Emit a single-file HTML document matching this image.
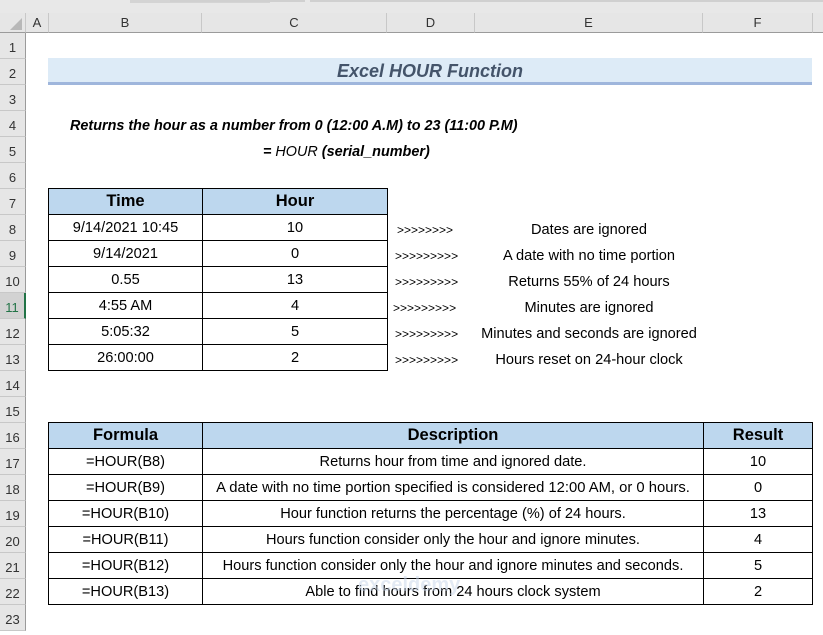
<!DOCTYPE html>
<html><head><meta charset="utf-8"><style>
*{margin:0;padding:0;box-sizing:border-box}
body{width:823px;height:618px;overflow:hidden;background:#fff;font-family:"Liberation Sans",Arial,sans-serif;font-size:14.6px;color:#000;position:relative}
.a{position:absolute}
.top{left:0;top:0;width:823px;height:13px;background:#e8e8e8}
.colh{top:13px;height:20px;background:#e6e6e6;border-bottom:1px solid #9b9b9b;color:#333;font-size:13px;text-align:center;line-height:19px;border-right:1px solid #c8c8c8}
.rowh{left:0;width:26px;height:26px;background:#e6e6e6;border-bottom:1px solid #c8c8c8;border-right:1px solid #9b9b9b;color:#333;font-size:13px;text-align:center;line-height:30px}
table{position:absolute;border-collapse:collapse;table-layout:fixed}
td{border:1px solid #000;height:26px;text-align:center;padding:0;white-space:nowrap;font-size:14.6px;padding-top:1px}
th{border:1px solid #000;height:26px;background:#bdd7ee;font-size:16.5px;font-weight:bold}
.t{white-space:nowrap;line-height:26px;margin-top:2px}
</style></head><body>
<div class="a top"></div>
<div class="a" style="left:130px;top:0;width:140px;height:3px;background:#d4d4d4"></div>
<div class="a" style="left:170px;top:0;width:135px;height:2px;background:#d0d0d0"></div>
<div class="a" style="left:310px;top:0;width:513px;height:2px;background:#d0d0d0"></div>
<div class="a colh" style="left:0;width:26px"><svg width="16" height="16" style="position:absolute;left:8px;top:3px"><polygon points="14,2 14,14 2,14" fill="#b8b8b8"/></svg></div>
<div class="a colh" style="left:26px;width:23px">A</div>
<div class="a colh" style="left:49px;width:153px">B</div>
<div class="a colh" style="left:202px;width:185px">C</div>
<div class="a colh" style="left:387px;width:88px">D</div>
<div class="a colh" style="left:475px;width:228px">E</div>
<div class="a colh" style="left:703px;width:110px">F</div>
<div class="a colh" style="left:813px;width:10px;border-right:none"></div>

<div class="a rowh" style="top:33px">1</div>
<div class="a rowh" style="top:59px">2</div>
<div class="a rowh" style="top:85px">3</div>
<div class="a rowh" style="top:111px">4</div>
<div class="a rowh" style="top:137px">5</div>
<div class="a rowh" style="top:163px">6</div>
<div class="a rowh" style="top:189px">7</div>
<div class="a rowh" style="top:215px">8</div>
<div class="a rowh" style="top:241px">9</div>
<div class="a rowh" style="top:267px">10</div>
<div class="a rowh" style="top:293px;background:#d2d2d2;border-right:2px solid #217346;color:#217346">11</div>
<div class="a rowh" style="top:319px">12</div>
<div class="a rowh" style="top:345px">13</div>
<div class="a rowh" style="top:371px">14</div>
<div class="a rowh" style="top:397px">15</div>
<div class="a rowh" style="top:423px">16</div>
<div class="a rowh" style="top:449px">17</div>
<div class="a rowh" style="top:475px">18</div>
<div class="a rowh" style="top:501px">19</div>
<div class="a rowh" style="top:527px">20</div>
<div class="a rowh" style="top:553px">21</div>
<div class="a rowh" style="top:579px">22</div>
<div class="a rowh" style="top:605px">23</div>

<div class="a" style="left:48px;top:58px;width:764px;height:27px;background:#ddebf7;border-bottom:3px solid #9fb6dc;text-align:center;font-weight:bold;font-style:italic;font-size:18px;color:#44546a;line-height:27px">Excel HOUR Function</div>

<div class="a t" style="left:70px;top:111px;font-weight:bold;font-style:italic;font-size:14.4px">Returns the hour as a number from 0 (12:00 A.M) to 23 (11:00 P.M)</div>
<div class="a t" style="left:263px;top:137px;font-size:14.4px"><b><i>=</i></b> <i>HOUR</i> <b><i>(serial_number)</i></b></div>

<table style="left:48px;top:188px;width:339px">
<colgroup><col style="width:154px"><col style="width:185px"></colgroup>
<tr><th>Time</th><th>Hour</th></tr>
<tr><td>9/14/2021 10:45</td><td>10</td></tr>
<tr><td>9/14/2021</td><td>0</td></tr>
<tr><td>0.55</td><td>13</td></tr>
<tr><td>4:55 AM</td><td>4</td></tr>
<tr><td>5:05:32</td><td>5</td></tr>
<tr><td>26:00:00</td><td>2</td></tr>
</table>

<div class="a t" style="left:397px;top:215px;font-size:12px">&gt;&gt;&gt;&gt;&gt;&gt;&gt;&gt;</div>
<div class="a t" style="left:395px;top:241px;font-size:12px">&gt;&gt;&gt;&gt;&gt;&gt;&gt;&gt;&gt;</div>
<div class="a t" style="left:395px;top:267px;font-size:12px">&gt;&gt;&gt;&gt;&gt;&gt;&gt;&gt;&gt;</div>
<div class="a t" style="left:393px;top:293px;font-size:12px">&gt;&gt;&gt;&gt;&gt;&gt;&gt;&gt;&gt;</div>
<div class="a t" style="left:395px;top:319px;font-size:12px">&gt;&gt;&gt;&gt;&gt;&gt;&gt;&gt;&gt;</div>
<div class="a t" style="left:395px;top:345px;font-size:12px">&gt;&gt;&gt;&gt;&gt;&gt;&gt;&gt;&gt;</div>

<div class="a t" style="left:475px;width:228px;text-align:center;top:215px">Dates are ignored</div>
<div class="a t" style="left:475px;width:228px;text-align:center;top:241px">A date with no time portion</div>
<div class="a t" style="left:475px;width:228px;text-align:center;top:267px">Returns 55% of 24 hours</div>
<div class="a t" style="left:475px;width:228px;text-align:center;top:293px">Minutes are ignored</div>
<div class="a t" style="left:465px;width:248px;text-align:center;top:319px">Minutes and seconds are ignored</div>
<div class="a t" style="left:475px;width:228px;text-align:center;top:345px">Hours reset on 24-hour clock</div>

<table style="left:48px;top:422px;width:764px">
<colgroup><col style="width:154px"><col style="width:501px"><col style="width:109px"></colgroup>
<tr><th>Formula</th><th>Description</th><th>Result</th></tr>
<tr><td>=HOUR(B8)</td><td>Returns hour from time and ignored date.</td><td>10</td></tr>
<tr><td>=HOUR(B9)</td><td style="font-size:14.8px">A date with no time portion specified is considered 12:00 AM, or 0 hours.</td><td>0</td></tr>
<tr><td>=HOUR(B10)</td><td>Hour function returns the percentage (%) of 24 hours.</td><td>13</td></tr>
<tr><td>=HOUR(B11)</td><td>Hours function consider only the hour and ignore minutes.</td><td>4</td></tr>
<tr><td>=HOUR(B12)</td><td style="font-size:14.6px">Hours function consider only the hour and ignore minutes and seconds.</td><td>5</td></tr>
<tr><td>=HOUR(B13)</td><td>Able to find hours from 24 hours clock system</td><td>2</td></tr>
</table>
<div class="a t" style="left:358px;top:570px;font-size:20px;font-weight:bold;color:#c9d6ea;opacity:.5">exceldemy</div>
</body></html>
